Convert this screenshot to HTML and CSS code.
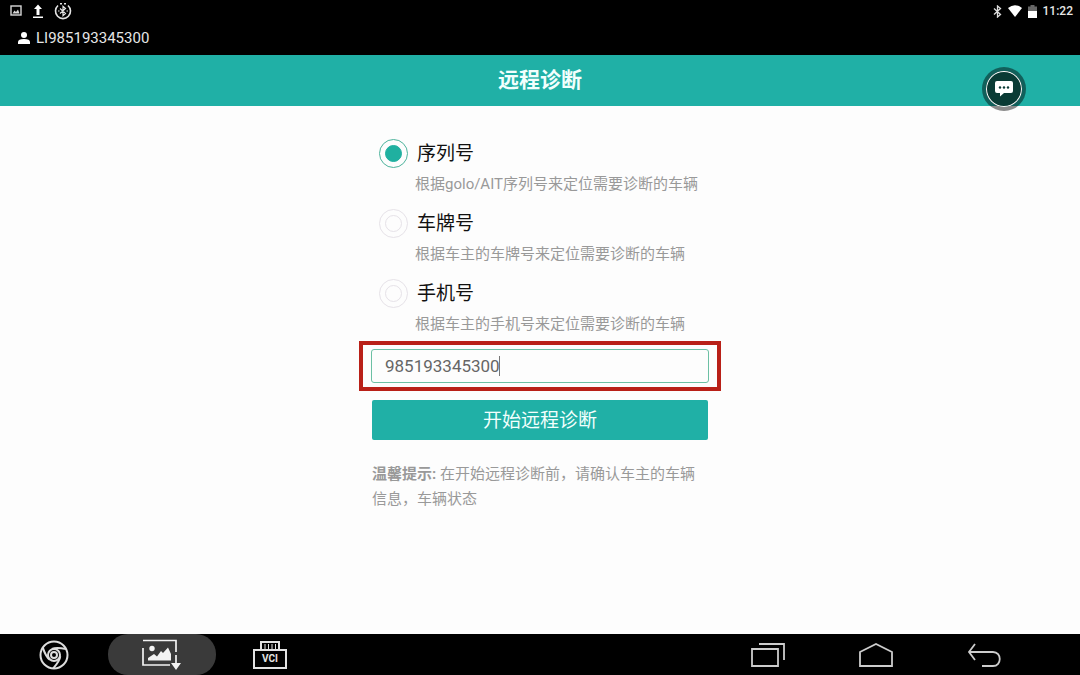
FILE: index.html
```html
<!DOCTYPE html>
<html lang="zh-CN">
<head>
  <meta charset="UTF-8" />
  <meta name="viewport" content="width=device-width, initial-scale=1.0"/>
  <title>远程诊断</title>
  <link rel="stylesheet" href="styles.css">
</head>
<body>

<div class="status">
  <div class="status-row">
    <div class="status-icons">
      <svg width="12" height="12" viewBox="0 0 12 12"><rect x="1" y="1" width="10" height="9" fill="none" stroke="#d8d8d8" stroke-width="1.4"/><path d="M2.5 8.500 L4.500 5.500 L6 7 L8 4.500 L9.500 8.500 Z" fill="#d8d8d8"/></svg>
      <svg width="12" height="15" viewBox="0 0 12 15"><path d="M6 0.500 L10 5 H7.500 V11 H4.500 V5 H2 Z M1 12.500 H11 V14 H1 Z" fill="#fff"/></svg>
      <svg width="18" height="18" viewBox="0 0 18 18" fill="none" stroke="#e4e4e4">
        <path d="M4 3.500 A7.500 7.500 0 1 0 14 3.500" stroke-width="1.600"/>
        <path d="M6 1.700 H8 M10 1.700 H12" stroke-width="1.600"/>
        <path d="M6 6.500 L11.500 11.500 L9 13.700 V4.300 L11.500 6.500 L6 11.500 M4 9 H5.500 M12.500 9 H14" stroke-width="1.200"/>
      </svg>
    </div>
    <div class="status-icons system">
      <svg width="9" height="13" viewBox="0 0 9 13"><path d="M1 3.500 L7.500 9.500 L4.500 12 V1 L7.500 3.500 L1 9.500" fill="none" stroke="#ddd" stroke-width="1.300"/></svg>
      <svg width="14" height="12" viewBox="0 0 14 12"><path d="M0 3 Q7 -2.500 14 3 L7 12 Z" fill="#fff"/></svg>
      <svg width="9" height="13" viewBox="0 0 9 13"><path d="M2.500 0 H6.500 V1.500 H9 V6 H0 V1.500 H2.500 Z" fill="#666"/><path d="M0 6 H9 V13 H0 Z" fill="#fff"/></svg>
      <span class="clock">11:22</span>
    </div>
  </div>
  <div class="user">
    <svg width="12" height="12" viewBox="0 0 12 12" fill="#fff"><circle cx="6" cy="3" r="3"/><path d="M0 12 V10 Q0 7 6 7 Q12 7 12 10 V12 Z"/></svg>
    <span>LI985193345300</span>
  </div>
</div>

<header class="title-bar">
  <h1>远程诊断</h1>
  <button class="chat" type="button" aria-label="消息">
    <svg width="18" height="16" viewBox="0 0 18 16"><path d="M2 0 H16 Q18 0 18 2 V10 Q18 12 16 12 H9 L5 15.500 V12 H2 Q0 12 0 10 V2 Q0 0 2 0 Z" fill="#fff"/><g fill="#0a3b35"><circle cx="5" cy="6.500" r="1.200"/><circle cx="9" cy="6.500" r="1.200"/><circle cx="13" cy="6.500" r="1.200"/></g></svg>
  </button>
</header>

<main>
  <form class="form">
    <div class="option">
      <label for="bySerial"><input type="radio" name="mode" id="bySerial" checked><span>序列号</span></label>
      <p>根据golo/AIT序列号来定位需要诊断的车辆</p>
    </div>
    <div class="option">
      <label for="byPlate"><input type="radio" name="mode" id="byPlate"><span>车牌号</span></label>
      <p>根据车主的车牌号来定位需要诊断的车辆</p>
    </div>
    <div class="option">
      <label for="byPhone"><input type="radio" name="mode" id="byPhone"><span>手机号</span></label>
      <p>根据车主的手机号来定位需要诊断的车辆</p>
    </div>

    <div class="highlight">
      <div class="field">
        <input type="text" id="serial" aria-label="序列号" value="985193345300">
        <span class="caret"></span>
      </div>
    </div>

    <button class="start" type="button">开始远程诊断</button>
    <p class="note"><b>温馨提示:</b> 在开始远程诊断前，请确认车主的车辆信息，车辆状态</p>
  </form>
</main>

<nav class="nav-bar">
  <div class="nav-group">
    <button type="button" aria-label="浏览器">
      <svg width="30" height="30" viewBox="0 0 30 30" fill="none" stroke="#ddd" stroke-width="2">
        <circle cx="15" cy="15" r="13.500"/>
        <circle cx="15" cy="15" r="6"/>
        <circle cx="15" cy="15" r="3"/>
        <path id="blade" d="M13 9 C16 7.500 22 8 27 9"/>
        <use href="#blade" transform="rotate(120 15 15)"/>
        <use href="#blade" transform="rotate(240 15 15)"/>
      </svg>
    </button>
    <button class="active" type="button" aria-label="截图">
      <svg width="40" height="32" viewBox="0 0 40 32" fill="none" stroke="#f2f2f2" stroke-width="1.700">
        <path d="M1 1.500 H34 V13 M34 16 V25 M1 9 V26 H28"/>
        <circle cx="10" cy="9.500" r="2.700" fill="#f2f2f2" stroke="none"/>
        <path d="M6 21.500 V19 L12 15 L15 17.500 L19 12 L21 14 L26 8.500 L29 15 V21.500 Z M29 24 H39 L34 31 Z" fill="#f2f2f2" stroke="none"/>
      </svg>
    </button>
    <button type="button" aria-label="VCI">
      <svg width="34" height="28" viewBox="0 0 34 28" fill="none" stroke="#e2e2e2" stroke-width="2">
        <path d="M8 9 V1 H26 V9 M1 9 H33 V27 H1 Z"/>
        <path d="M12 3 V8 M15.500 3 V8 M19 3 V8 M22.500 3 V8" stroke-width="1"/>
        <text class="vci" x="17" y="21">VCI</text>
      </svg>
    </button>
  </div>
  <div class="nav-group">
    <button type="button" aria-label="最近任务">
      <svg width="34" height="24" viewBox="0 0 34 24" fill="none" stroke="#ccc" stroke-width="1.800"><path d="M1 6 H27 V23 H1 Z M8 1 H33 V17"/></svg>
    </button>
    <button type="button" aria-label="主页">
      <svg width="34" height="24" viewBox="0 0 34 24" fill="none" stroke="#ccc" stroke-width="1.800"><path d="M1 23 V9 L17 1 L33 9 V23 Z"/></svg>
    </button>
    <button type="button" aria-label="返回">
      <svg width="34" height="24" viewBox="0 0 34 24" fill="none" stroke="#ccc" stroke-width="1.800"><path d="M8 1 L2 9 L8 17 M2 9 H26 C35 9 35 23 26 23 H15"/></svg>
    </button>
  </div>
</nav>

</body>
</html>
```
FILE: styles.css
```css
* {
  box-sizing: border-box;
}
body {
  font-family: Roboto, "Noto Sans CJK SC", sans-serif;
  margin: 0;
  background: #fdfdfd;
  display: flex;
  flex-direction: column;
  min-height: 100vh;
}
h1, p {
  margin: 0;
}
button {
  font-family: inherit;
  padding: 0;
  border: none;
  cursor: pointer;
}
svg {
  display: block;
}

/* status bar */
.status {
  background: #000;
  color: #e6e6e6;
  padding-bottom: 2px;
}
.status-row {
  display: flex;
  justify-content: space-between;
  align-items: center;
  height: 22px;
  padding: 0 7px 0 10px;
}
.status-icons {
  display: flex;
  align-items: center;
  gap: 10px;
}
.status-icons.system {
  gap: 6px;
}
.clock {
  font-size: 12px;
  font-weight: 500;
}
.user {
  display: flex;
  align-items: center;
  gap: 6px;
  height: 31px;
  padding-left: 18px;
  font-size: 15px;
}

/* title bar */
.title-bar {
  position: relative;
  height: 51px;
  background: #20b0a6;
  color: #f2fffd;
  text-align: center;
}
h1 {
  font-size: 21px;
  line-height: 50px;
  font-weight: 700;
}
.chat {
  position: absolute;
  top: 12px;
  right: 54px;
  width: 44px;
  height: 44px;
  border-radius: 50%;
  border: 4px solid rgba(0, 0, 0, 0.45);
  background: #0a3b35;
  background-clip: padding-box;
  box-shadow: inset 0 0 0 1px #fff;
  display: flex;
  justify-content: center;
  align-items: center;
}

/* form */
main {
  flex: 1;
  padding: 32px 0;
}
.form {
  width: 100%;
  max-width: 362px;
  margin: 0 auto;
}
.option {
  padding-left: 20px;
  margin-bottom: 13px;
}
.option label {
  display: flex;
  align-items: center;
  gap: 9px;
  height: 30px;
  font-size: 19px;
  color: #111;
}
.option label span {
  padding-bottom: 4px;
}
.option p {
  margin: 5px 0 0 36px;
  font-size: 15px;
  line-height: 22px;
  color: #999;
}
input[type="radio"] {
  appearance: none;
  display: flex;
  justify-content: center;
  align-items: center;
  width: 29px;
  height: 29px;
  margin: 0;
  border: 1px solid #e6e2e8;
  border-radius: 50%;
}
input[type="radio"]::before {
  content: "";
  width: 15px;
  height: 15px;
  border: 1px solid #e6e2e8;
  border-radius: 50%;
}
input[type="radio"]:checked {
  border-color: #4db39c;
}
input[type="radio"]:checked::before {
  background: #20b0a0;
  border-color: #20b0a0;
}
.highlight {
  margin-top: -7px;
  padding: 4px 8px;
  border: 4px solid #b92018;
}
.field {
  position: relative;
}
input[type="text"] {
  display: block;
  width: 100%;
  height: 34px;
  padding: 0 13px;
  border: 1px solid #6cc0a4;
  border-radius: 3px;
  background: #fdfdfd;
  font-family: inherit;
  font-size: 17px;
  color: #666;
}
.caret {
  position: absolute;
  top: 7px;
  left: 128px;
  width: 1px;
  height: 20px;
  background: #777;
}
.start {
  display: block;
  width: calc(100% - 26px);
  height: 40px;
  margin: 9px auto 0;
  padding-bottom: 4px;
  border-radius: 2px;
  background: #20b0a6;
  color: #f2fffd;
  font-size: 19px;
}
.note {
  margin: 22px 13px 0;
  font-size: 15px;
  line-height: 25px;
  color: #999;
}

/* bottom navigation */
.nav-bar {
  display: flex;
  justify-content: space-between;
  height: 41px;
  padding-right: 42px;
  background: #000;
}
.nav-group {
  display: flex;
}
.nav-group button {
  display: flex;
  justify-content: center;
  align-items: center;
  width: 108px;
  background: none;
}
.nav-group .active {
  border-radius: 20px;
  background: #3a3a3a;
}
.vci {
  font: 700 10px Roboto, sans-serif;
  text-anchor: middle;
  fill: #e2e2e2;
  stroke: none;
}
```
